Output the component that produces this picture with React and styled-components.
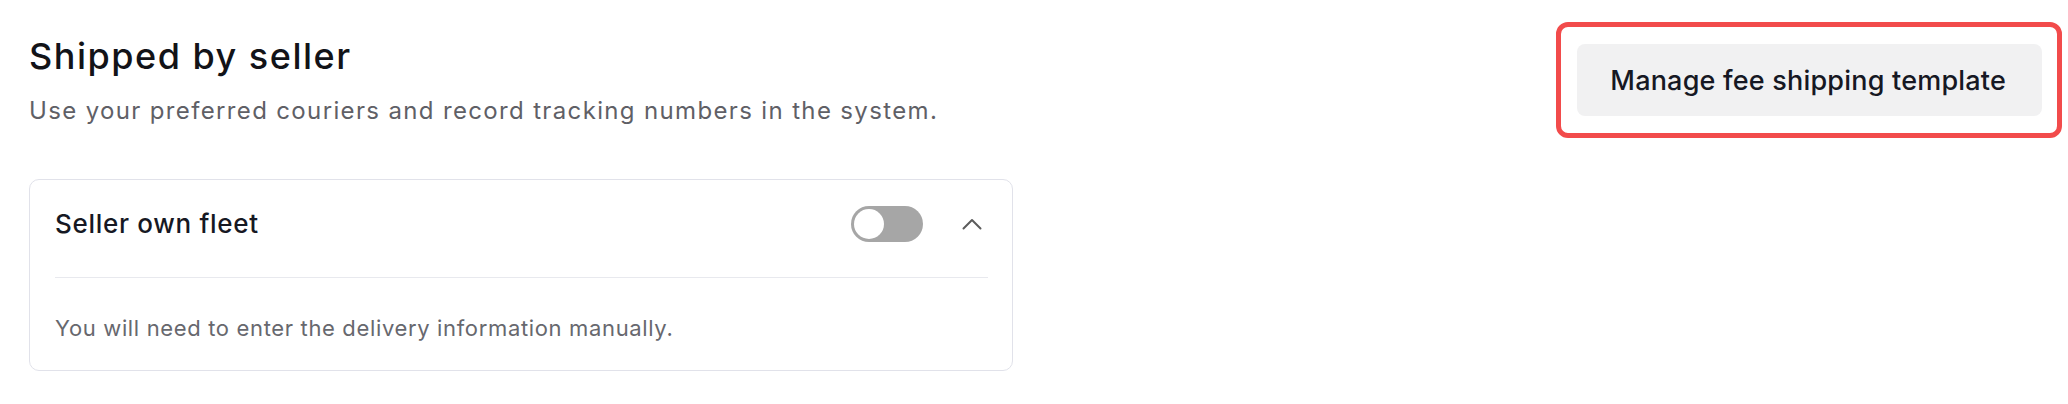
import React from 'react'
import styled, { createGlobalStyle } from 'styled-components'

const GlobalStyle = createGlobalStyle`
    body {
        margin: 0;
        background: #ffffff;
        font-family: Inter, "Noto Sans", "Liberation Sans", sans-serif;
        color: #161823;
    }
`

const App = () => {
    return (
        <>
            <GlobalStyle />
            <Page>
                <Header>
                    <TitleBlock>
                        <Title>Shipped by seller</Title>
                        <Subtitle>Use your preferred couriers and record tracking numbers in the system.</Subtitle>
                    </TitleBlock>
                    <Highlight>
                        <GhostButton>Manage fee shipping template</GhostButton>
                    </Highlight>
                </Header>

                <Card>
                    <CardHead>
                        <CardTitle>Seller own fleet</CardTitle>
                        <HeadActions>
                            <Toggle>
                                <Knob />
                            </Toggle>
                            <Chevron width="20" height="12" viewBox="0 0 20 12">
                                <path d="M1.5 10.5 L10 2 L18.5 10.5" fill="none" stroke="#5c5c5c" strokeWidth="2" strokeLinecap="round" strokeLinejoin="round" />
                            </Chevron>
                        </HeadActions>
                    </CardHead>
                    <Divider />
                    <CardBody>You will need to enter the delivery information manually.</CardBody>
                </Card>
            </Page>
        </>
    )
}

export default App

const Page = styled.div`
    padding: 34px 26px 0 29px;
`

// Header
const Header = styled.div`
    display: flex;
    justify-content: space-between;
    align-items: flex-start;
`

const TitleBlock = styled.div`
    display: flex;
    flex-direction: column;
    gap: 17px;
`

const Title = styled.h1`
    margin: 0;
    font-size: 36px;
    line-height: 44px;
    font-weight: 500;
    letter-spacing: 1.5px;
    color: #121318;
`

const Subtitle = styled.p`
    margin: 0;
    font-size: 24px;
    line-height: 32px;
    font-weight: 400;
    letter-spacing: 1.35px;
    color: #5f6066;
`

// red annotation box round the button
const Highlight = styled.div`
    position: relative;
    margin-top: 10px;

    &::after {
        content: "";
        position: absolute;
        inset: -22px -20px -22px -21px;
        border: 5px solid #f24b4b;
        border-radius: 12px;
        pointer-events: none;
    }
`

const GhostButton = styled.button`
    height: 72px;
    padding: 0 36px 0 33px;
    border: none;
    border-radius: 8px;
    background: #f1f1f2;
    font-family: inherit;
    font-size: 27px;
    font-weight: 500;
    letter-spacing: 0.2px;
    color: #161823;
`

// Card
const Card = styled.div`
    box-sizing: border-box;
    width: 984px;
    margin-top: 52px;
    border: 1px solid #e1e2ea;
    border-radius: 10px;
    padding: 0 24px 0 25px;
`

const CardHead = styled.div`
    display: flex;
    justify-content: space-between;
    align-items: center;
    padding: 26px 0 35px;
`

const CardTitle = styled.h3`
    margin: 0;
    font-size: 26px;
    line-height: 36px;
    font-weight: 500;
    letter-spacing: 0.7px;
    color: #161823;
`

const HeadActions = styled.div`
    display: flex;
    align-items: center;
    gap: 39px;
`

const Toggle = styled.div`
    box-sizing: border-box;
    width: 72px;
    height: 36px;
    padding: 3px;
    border-radius: 18px;
    background: #a6a6a6;
    display: flex;
    align-items: center;
`

const Knob = styled.div`
    width: 30px;
    height: 30px;
    border-radius: 50%;
    background: #ffffff;
`

const Chevron = styled.svg`
    display: block;
    margin-right: 6px;
`

const Divider = styled.div`
    height: 1px;
    background: #e8e9ee;
`

const CardBody = styled.p`
    margin: 0;
    padding: 35px 0 27px;
    font-size: 22px;
    line-height: 30px;
    letter-spacing: 0.65px;
    color: #67686e;
`
